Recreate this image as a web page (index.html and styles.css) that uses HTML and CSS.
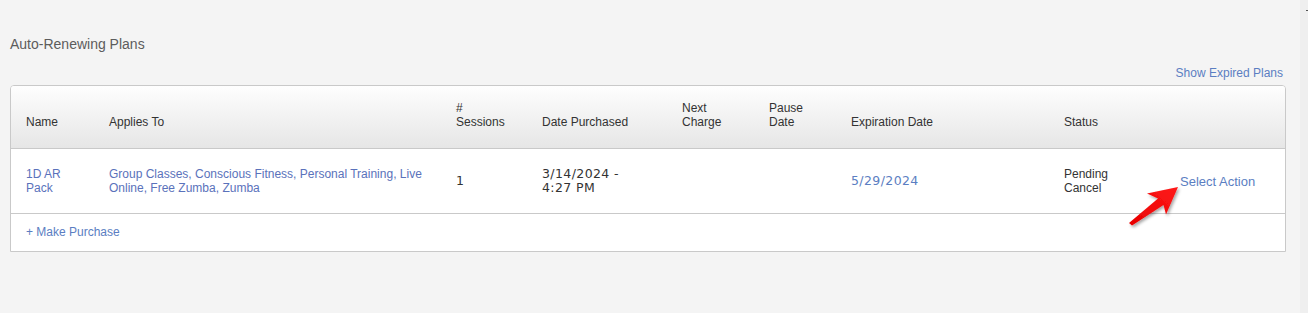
FILE: index.html
```html
<!doctype html>
<html lang="en">
  <head>
    <meta charset="UTF-8" />
    <meta name="viewport" content="width=device-width, initial-scale=1.0" />
    <title>Auto-Renewing Plans</title>
    <link rel="stylesheet" href="styles.css">
  </head>
  <body>
    <div class="page">
      <div class="main">
        <h2 class="section-title">Auto-Renewing Plans</h2>

        <div class="toolbar">
          <a class="link" href="#">Show Expired Plans</a>
        </div>

        <div class="plans">
          <table class="plans-table">
            <thead>
              <tr>
                <th class="col-name">Name</th>
                <th class="col-applies">Applies To</th>
                <th class="col-sessions">#<br>Sessions</th>
                <th class="col-purchased">Date Purchased</th>
                <th class="col-next">Next<br>Charge</th>
                <th class="col-pause">Pause<br>Date</th>
                <th class="col-expires">Expiration Date</th>
                <th class="col-status">Status</th>
                <th class="col-action"></th>
              </tr>
            </thead>
            <tbody>
              <tr>
                <td><a class="link link-plan" href="#">1D AR<br>Pack</a></td>
                <td><a class="link link-plan" href="#">Group Classes, Conscious Fitness, Personal Training, Live<br>Online, Free Zumba, Zumba</a></td>
                <td class="num">1</td>
                <td class="num">3/14/2024 -<br>4:27 PM</td>
                <td></td>
                <td></td>
                <td class="num"><a class="link" href="#">5/29/2024</a></td>
                <td>Pending<br>Cancel</td>
                <td><a class="link action" href="#">Select Action</a></td>
              </tr>
            </tbody>
          </table>

          <div class="purchase">
            <a class="link" href="#">+ Make Purchase</a>
          </div>

          <!-- annotation arrow pointing at the action link -->
          <svg class="pointer" width="70" height="52" viewBox="0 0 70 52">
            <defs>
              <linearGradient id="arrowFill" x1="0" y1="1" x2="1" y2="0">
                <stop offset="0" stop-color="#e80000" />
                <stop offset="1" stop-color="#ff1a1a" />
              </linearGradient>
              <filter id="arrowShadow" x="-20%" y="-20%" width="150%" height="150%">
                <feDropShadow dx="1.5" dy="2" stdDeviation="1.5" flood-color="#000" flood-opacity="0.35" />
              </filter>
            </defs>
            <polygon
              points="57,6 26,12.5 37,17.5 8,42 11,44.5 42.5,24 45,33.5"
              fill="url(#arrowFill)"
              filter="url(#arrowShadow)"
            />
          </svg>
        </div>
      </div>
      <div class="gutter"><span class="tick"></span></div>
    </div>
  </body>
</html>
```

FILE: styles.css
```css
html,
body {
  margin: 0;
  height: 100%;
}
body {
  font-family: "Liberation Sans", Arial, sans-serif;
  font-size: 12px;
  color: #333;
  background: #f4f4f4;
}
.page {
  display: flex;
  min-height: 100%;
}
.main {
  flex: 1;
  padding: 35px 14px 0 10px;
}
.gutter {
  width: 8px;
  background: #efefef;
  position: relative;
}
.tick {
  position: absolute;
  right: 0;
  top: 10px;
  width: 2px;
  height: 1px;
  background: #555;
}

.section-title {
  margin: 0;
  font-size: 14px;
  font-weight: normal;
  line-height: 18px;
  color: #5c5c5c;
}

.toolbar {
  display: flex;
  justify-content: flex-end;
  margin-top: 12px;
  line-height: 16px;
  padding-right: 3px;
}

.link {
  color: #5b7ec2;
  text-decoration: none;
}
.link-plan {
  color: #5a72bb;
}

/* Plans table */
.plans {
  position: relative;
  margin-top: 4px;
  background: #fff;
  border: 1px solid #c9c9c9;
  border-radius: 4px 4px 0 0;
  overflow: hidden;
}
.plans-table {
  width: 100%;
  border-collapse: separate;
  border-spacing: 0;
  table-layout: fixed;
}
.plans-table th,
.plans-table td {
  box-sizing: border-box;
  padding: 0 10px 0 15px;
  text-align: left;
  line-height: 14px;
  border-bottom: 1px solid #c9c9c9;
}
.plans-table th {
  height: 63px;
  padding-bottom: 19px;
  vertical-align: bottom;
  font-weight: normal;
  color: #333;
  background: linear-gradient(#fefefe, #e6e6e6);
}
.plans-table td {
  height: 65px;
  vertical-align: middle;
}
/* the dates use wider figures */
.plans-table td.num {
  font-family: "DejaVu Sans", sans-serif;
  font-size: 12.5px;
  letter-spacing: 0.4px;
}

.col-name { width: 83px; }
.col-applies { width: 347px; }
.col-sessions { width: 86px; }
.col-purchased { width: 140px; }
.col-next { width: 87px; }
.col-pause { width: 82px; }
.col-expires { width: 213px; }
.col-status { width: 116px; }

.action {
  font-size: 13px;
  position: relative;
  top: 1px;
}

.purchase {
  height: 37px;
  line-height: 37px;
  padding-left: 15px;
}

.pointer {
  position: absolute;
  left: 1110px;
  top: 95px;
  overflow: visible;
}
```
